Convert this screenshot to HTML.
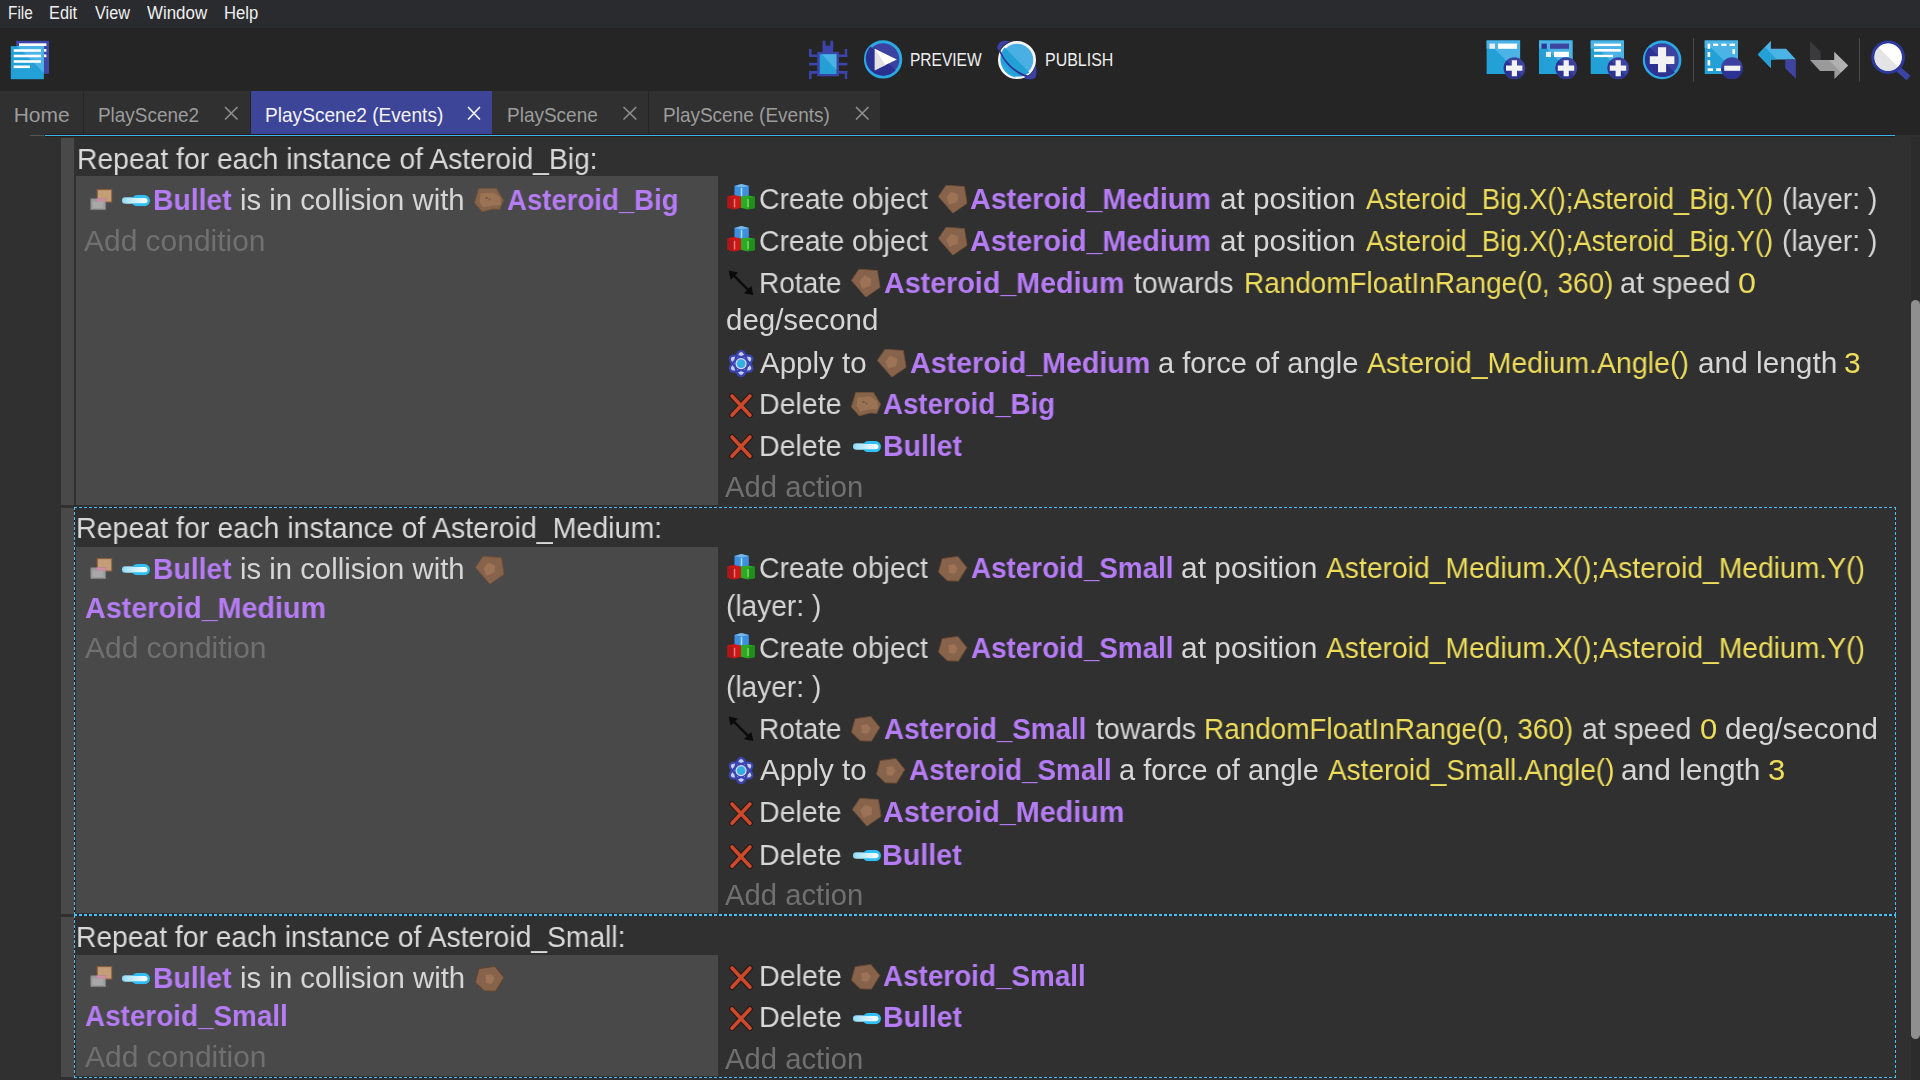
<!DOCTYPE html>
<html><head><meta charset="utf-8">
<style>
html,body{margin:0;padding:0;}
body{width:1920px;height:1080px;overflow:hidden;position:relative;background:#303030;font-family:"Liberation Sans",sans-serif;}
.a{position:absolute;}
.t{position:absolute;white-space:nowrap;line-height:40px;height:40px;transform-origin:0 0;}
.w,.h,.p,.y,.g{will-change:transform;}
.w{font-size:29px;color:#d6d6d6;}
.h{font-size:29px;color:#d9d9d9;}
.p{font-size:29px;font-weight:bold;color:#b67cf6;}
.y{font-size:29px;color:#eedd5a;}
.g{font-size:29px;color:#707070;}
.menu{font-size:18px;color:#f0f0f0;}
.tb{font-size:18px;color:#f0f0f0;}
.tab{font-size:21px;color:#9c9c9c;}
.taba{font-size:21px;color:#f4f4f4;}
.dh{position:absolute;height:1px;background:repeating-linear-gradient(90deg,#4ac0f6 0 3px,#2b2522 3px 5px);}
.dv{position:absolute;width:1px;background:repeating-linear-gradient(180deg,#4ac0f6 0 3px,#2b2522 3px 5px);}
svg.i{position:absolute;overflow:visible;}
</style></head><body>
<!-- menubar -->
<div class="a" style="left:0;top:0;width:1920px;height:28px;background:#2a2b2e"></div>
<!-- toolbar + tabbar bg -->
<div class="a" style="left:0;top:28px;width:1920px;height:107px;background:#252525"></div>
<!-- tabs -->
<div class="a" style="left:0;top:91px;width:83px;height:44px;background:#303030"></div>
<div class="a" style="left:84px;top:91px;width:166px;height:44px;background:#303030"></div>
<div class="a" style="left:251px;top:91px;width:241px;height:44px;background:#3d4599"></div>
<div class="a" style="left:492px;top:91px;width:156px;height:44px;background:#303030"></div>
<div class="a" style="left:649px;top:91px;width:231px;height:44px;background:#303030"></div>
<!-- tab close x -->
<svg class="a" style="left:0;top:0" width="1920" height="140" viewBox="0 0 1920 140">
 <g stroke="#8e8e8e" stroke-width="1.7" stroke-linecap="round">
  <path d="M225.5 107.5L237 119M237 107.5L225.5 119"/>
  <path d="M624 107.5L635.8 119M635.8 107.5L624 119"/>
  <path d="M856.5 107.5L868 119M868 107.5L856.5 119"/>
 </g>
 <path d="M468.5 107.5L479.5 119M479.5 107.5L468.5 119" stroke="#f4f4f4" stroke-width="1.7" stroke-linecap="round"/>
 <!-- blue line -->
 <rect x="45" y="134" width="1850" height="1" fill="#211d1b"/>
 <rect x="45" y="135" width="1850" height="1" fill="#3db5ef"/>
 <rect x="45" y="136" width="1850" height="1" fill="#261f1c"/>
 <rect x="30" y="135" width="14" height="1" fill="#555"/>
</svg>
<!-- scrollbar -->
<div class="a" style="left:1911px;top:137px;width:9px;height:943px;background:#2c2c2c"></div>
<div class="a" style="left:1911px;top:300px;width:8.5px;height:739px;background:#8f8f8f;border-radius:4.5px"></div>
<!-- gutters -->
<div class="a" style="left:61px;top:138px;width:13px;height:367px;background:#494949"></div>
<div class="a" style="left:61px;top:508px;width:13px;height:406px;background:#494949"></div>
<div class="a" style="left:61px;top:917px;width:13px;height:160px;background:#494949"></div>
<!-- condition boxes -->
<div class="a" style="left:76px;top:176px;width:642px;height:329px;background:#494949"></div>
<div class="a" style="left:76px;top:547px;width:642px;height:366px;background:#494949"></div>
<div class="a" style="left:76px;top:955px;width:642px;height:121px;background:#494949"></div>
<!-- selection dashed borders -->
<div class="dh" style="left:74px;top:507px;width:1822px"></div>
<div class="dh" style="left:74px;top:914px;width:1822px"></div>
<div class="dv" style="left:74px;top:507px;height:408px"></div>
<div class="dv" style="left:1895px;top:507px;height:408px"></div>
<div class="dh" style="left:74px;top:915px;width:1822px"></div>
<div class="dh" style="left:74px;top:1077px;width:1822px"></div>
<div class="dv" style="left:74px;top:915px;height:163px"></div>
<div class="dv" style="left:1895px;top:915px;height:163px"></div>


<svg width="0" height="0" style="position:absolute">
<defs>
 <linearGradient id="gcore" x1="0" x2="1" y1="0" y2="0"><stop offset="0" stop-color="#9fe0fa"/><stop offset="1" stop-color="#ffffff"/></linearGradient>
 <symbol id="col" viewBox="0 0 23 22">
  <rect x="7.3" y="0.6" width="15" height="12.8" fill="#c29d75" stroke="#8a5a3a" stroke-width="1.1"/>
  <rect x="0.8" y="10" width="15.2" height="11.2" fill="#9b9b9b" stroke="#7c7c7c" stroke-width="0.8"/>
  <rect x="7" y="9.6" width="9" height="3.2" fill="#d48aa6"/>
  <rect x="2.5" y="13" width="11" height="6.5" fill="#a8a8a8"/>
 </symbol>
 <symbol id="bul" viewBox="0 0 28 11.2">
  <rect x="0" y="2.2" width="13" height="6.6" rx="3.3" fill="#8fdcf9"/>
  <rect x="9.5" y="0" width="18.5" height="11.2" rx="5.6" fill="#31bef4"/>
  <rect x="2" y="3" width="23.5" height="5.2" rx="2.6" fill="url(#gcore)"/>
 </symbol>
 <symbol id="astm" viewBox="0 0 30 29">
  <polygon points="8,0.3 26.7,1.6 29.5,18.6 15,28.6 0.3,11.6" fill="#86634a" stroke="#6f4f37" stroke-width="0.9"/>
  <polygon points="13.4,6.5 20.5,10 19.7,17 11.4,20 8.4,12.6" fill="#9c7356"/>
 </symbol>
 <symbol id="astb" viewBox="0 0 30 24.2">
  <polygon points="4.7,0.3 22.4,0.3 29.7,12.2 25.8,21.6 19.5,21 8.2,24 0.3,15" fill="#86644a" stroke="#6f4f37" stroke-width="0.9"/>
  <path d="M6.5,5.5 L19,4.5 L26,9 L27,17 L19,17.5 L9,19.5 L5.5,14 Z" fill="#9a7254"/>
  <circle cx="12.5" cy="10" r="1.3" fill="#7c5a40"/><circle cx="15.5" cy="11.5" r="1" fill="#7c5a40"/>
 </symbol>
 <symbol id="asts" viewBox="0 0 30 26">
  <polygon points="4.1,2.5 20.2,0.3 29.4,11.6 20.8,25.6 9.5,25.2 0.3,16.4" fill="#86634a" stroke="#5f432f" stroke-width="1"/>
  <polygon points="10.5,9 16.5,8 20,12.5 17,18 11,17.5" fill="#9c7356"/>
 </symbol>
 <symbol id="cre" viewBox="0 0 28.5 26">
  <path d="M7.5,2 L14.5,0 L22,2 L22,12.5 L14.5,14 L7.5,12.5 Z" fill="#3b8fdc"/>
  <path d="M7.5,2 L14.5,3.5 L22,2 L14.5,0 Z" fill="#7ab8ec"/>
  <rect x="13.8" y="4" width="1.6" height="8" fill="#a8dcf8"/>
  <path d="M0.5,12.5 L7,11 L14,12.5 L14,24 L7,25.8 L0.5,24 Z" fill="#cf1717"/>
  <path d="M0.5,12.5 L7,14 L7,25.8 L0.5,24 Z" fill="#b01818"/>
  <rect x="6.8" y="15" width="1.5" height="8.5" fill="#f07878"/>
  <path d="M14,12.5 L21,11.5 L28.3,12.8 L28.3,24.2 L21,25.8 L14,24 Z" fill="#2eaa24"/>
  <path d="M21,14 L28.3,12.8 L28.3,24.2 L21,25.8 Z" fill="#1f8f1a"/>
  <rect x="20.5" y="15" width="1.5" height="8.5" fill="#7ad870"/>
 </symbol>
 <symbol id="rot" viewBox="0 0 26 26">
  <path d="M3.5,3.5 L22.5,22.5" stroke="#0a0a0a" stroke-width="2.4"/>
  <polygon points="0.5,0.5 10,2.5 2.5,10" fill="#0a0a0a"/>
  <polygon points="25.5,25.5 16,23.5 23.5,16" fill="#0a0a0a"/>
 </symbol>
 <symbol id="frc" viewBox="0 0 26.2 27.2">
  <g transform="translate(13.1,13.6)">
   <g fill="#c8cbee">
    <ellipse rx="5.8" ry="12.6"/>
    <ellipse rx="5.8" ry="12.6" transform="rotate(60)"/>
    <ellipse rx="5.8" ry="12.6" transform="rotate(120)"/>
   </g>
   <g fill="none" stroke="#3a44ae" stroke-width="2.2">
    <ellipse rx="5.8" ry="12.6"/>
    <ellipse rx="5.8" ry="12.6" transform="rotate(60)"/>
    <ellipse rx="5.8" ry="12.6" transform="rotate(120)"/>
   </g>
   <circle r="5.6" fill="#d8daf4"/>
   <circle r="4.3" fill="#34ade2"/>
  </g>
 </symbol>
 <symbol id="del" viewBox="0 0 24 25.3">
  <path d="M3,3 L21,22.3 M21,3 L3,22.3" stroke="#2a1612" stroke-width="5.6" stroke-linecap="round"/>
  <path d="M3,3 L21,22.3 M21,3 L3,22.3" stroke="#cb4a2e" stroke-width="3.6" stroke-linecap="round"/>
 </symbol>
</defs></svg>

<svg class="i" style="left:89.5px;top:188.7px" width="22.6" height="21.5"><use href="#col"/></svg>
<svg class="i" style="left:122.0px;top:195.0px" width="28" height="11.2"><use href="#bul"/></svg>
<svg class="i" style="left:474.4px;top:188.1px" width="30" height="24.1"><use href="#astb"/></svg>
<svg class="i" style="left:89.5px;top:558.0px" width="22.6" height="21.5"><use href="#col"/></svg>
<svg class="i" style="left:122.0px;top:564.3px" width="28" height="11.2"><use href="#bul"/></svg>
<svg class="i" style="left:474.9px;top:556.1px" width="29.7" height="28.6"><use href="#astm"/></svg>
<svg class="i" style="left:89.5px;top:966.3px" width="22.6" height="21.5"><use href="#col"/></svg>
<svg class="i" style="left:122.0px;top:972.6px" width="28" height="11.2"><use href="#bul"/></svg>
<svg class="i" style="left:475.0px;top:966.3px" width="29.6" height="25.8"><use href="#asts"/></svg>
<svg class="i" style="left:726.8px;top:184.1px" width="28.3" height="25.8"><use href="#cre"/></svg>
<svg class="i" style="left:938.3px;top:184.7px" width="29.7" height="28.6"><use href="#astm"/></svg>
<svg class="i" style="left:726.8px;top:226.4px" width="28.3" height="25.8"><use href="#cre"/></svg>
<svg class="i" style="left:938.3px;top:227.0px" width="29.7" height="28.6"><use href="#astm"/></svg>
<svg class="i" style="left:728.0px;top:270.0px" width="26" height="25.6"><use href="#rot"/></svg>
<svg class="i" style="left:851.0px;top:268.6px" width="29.7" height="28.6"><use href="#astm"/></svg>
<svg class="i" style="left:727.8px;top:349.6px" width="26.2" height="27.2"><use href="#frc"/></svg>
<svg class="i" style="left:876.5px;top:348.8px" width="29.7" height="28.6"><use href="#astm"/></svg>
<svg class="i" style="left:728.9px;top:392.5px" width="24" height="25.3"><use href="#del"/></svg>
<svg class="i" style="left:851.0px;top:392.4px" width="30" height="24.1"><use href="#astb"/></svg>
<svg class="i" style="left:728.9px;top:434.4px" width="24" height="25.3"><use href="#del"/></svg>
<svg class="i" style="left:853.2px;top:440.6px" width="28" height="11.2"><use href="#bul"/></svg>
<svg class="i" style="left:726.8px;top:553.7px" width="28.3" height="25.8"><use href="#cre"/></svg>
<svg class="i" style="left:938.3px;top:556.1px" width="29.6" height="25.8"><use href="#asts"/></svg>
<svg class="i" style="left:726.8px;top:633.1px" width="28.3" height="25.8"><use href="#cre"/></svg>
<svg class="i" style="left:938.3px;top:635.5px" width="29.6" height="25.8"><use href="#asts"/></svg>
<svg class="i" style="left:728.0px;top:716.0px" width="26" height="25.6"><use href="#rot"/></svg>
<svg class="i" style="left:851.1px;top:716.4px" width="29.6" height="25.8"><use href="#asts"/></svg>
<svg class="i" style="left:727.8px;top:757.1px" width="26.2" height="27.2"><use href="#frc"/></svg>
<svg class="i" style="left:876.4px;top:758.1px" width="29.6" height="25.8"><use href="#asts"/></svg>
<svg class="i" style="left:728.9px;top:801.0px" width="24" height="25.3"><use href="#del"/></svg>
<svg class="i" style="left:851.5px;top:798.1px" width="29.7" height="28.6"><use href="#astm"/></svg>
<svg class="i" style="left:728.9px;top:843.8px" width="24" height="25.3"><use href="#del"/></svg>
<svg class="i" style="left:853.1px;top:850.0px" width="28" height="11.2"><use href="#bul"/></svg>
<svg class="i" style="left:728.9px;top:964.7px" width="24" height="25.3"><use href="#del"/></svg>
<svg class="i" style="left:851.2px;top:963.6px" width="29.6" height="25.8"><use href="#asts"/></svg>
<svg class="i" style="left:728.9px;top:1006.3px" width="24" height="25.3"><use href="#del"/></svg>
<svg class="i" style="left:853.2px;top:1012.5px" width="28" height="11.2"><use href="#bul"/></svg>
<svg class="a" style="left:0;top:0" width="1920" height="91" viewBox="0 0 1920 91">
 <!-- left events icon -->
 <rect x="16" y="40.8" width="33" height="33" fill="#3d45a5"/>
 <rect x="19" y="43.3" width="27.4" height="2.7" fill="#fff"/>
 <rect x="43.6" y="49" width="2.8" height="2.7" fill="#fff"/>
 <rect x="43.6" y="54.5" width="2.8" height="2.7" fill="#fff"/>
 <rect x="10.8" y="46.1" width="33.1" height="33.1" fill="#23a0d5"/>
 <polygon points="17,46.1 43.9,46.1 43.9,73" fill="#4cb3e6"/>
 <rect x="13.7" y="49.2" width="27.3" height="2.6" fill="#fff"/>
 <rect x="13.7" y="54.7" width="27.3" height="2.6" fill="#fff"/>
 <rect x="13.7" y="60.2" width="27.3" height="2.6" fill="#fff"/>
 <rect x="13.7" y="65.5" width="16.3" height="2.6" fill="#fff"/>
 <!-- bug -->
 <g fill="#3c44a8">
  <rect x="817.2" y="51.9" width="21.8" height="24.4"/>
  <rect x="822.6" y="45.6" width="10.6" height="6.5"/>
  <rect x="822.6" y="40.7" width="3" height="5.5"/><rect x="830.2" y="40.7" width="3" height="5.5"/>
  <rect x="809" y="49" width="2.5" height="8"/><rect x="809" y="54.5" width="8.5" height="2.5"/>
  <rect x="844.7" y="49" width="2.5" height="8"/><rect x="838.8" y="54.5" width="8.5" height="2.5"/>
  <rect x="809" y="62.8" width="8.5" height="2.6"/><rect x="838.8" y="62.8" width="8.5" height="2.6"/>
  <rect x="809" y="71" width="2.5" height="8.1"/><rect x="809" y="71" width="8.5" height="2.8"/>
  <rect x="844.7" y="71" width="2.5" height="8.1"/><rect x="838.8" y="71" width="8.5" height="2.8"/>
 </g>
 <rect x="819.8" y="54.2" width="16.6" height="19.8" fill="#25a0d5"/>
 <polygon points="822,54.2 836.4,54.2 836.4,70" fill="#4cb2e5"/>
 <!-- preview -->
 <circle cx="883.1" cy="59.4" r="17.7" fill="#3b429f" stroke="#2aa9e2" stroke-width="3"/>
 <path d="M870.5,46.5 A16.6,16.6 0 0 0 895.7,70.3 Z" fill="#2a3190"/>
 <polygon points="874.8,48.75 874.8,70.2 896.8,59.6" fill="#ffffff"/>
 <polygon points="874.8,48.75 874.8,70.2 885.5,65" fill="#e2e2e4"/>
 <!-- publish -->
 <circle cx="1017" cy="60" r="17.6" fill="#4ab0e4" stroke="#f4f4f4" stroke-width="2.8"/>
 <path d="M1004.6,47.6 A17.6,17.6 0 0 0 1029.4,72.4 Z" fill="#23a0d5"/>
 <path d="M1001.5,62 A17.6,17.6 0 0 0 1016,77.5 L1010,70 Z" fill="#2aa7de"/>
 <path d="M998.5,49.5 C1002,60 1011,70 1022,75.5 C1027,78 1032,78.5 1035.5,77 L1035.8,74.8 C1031,76.5 1026,75.5 1022.5,73.6 C1012,68.5 1004.5,60 1001,51.5 Z" fill="#2c3596"/>
 <path d="M997.3,49 C997,45 999,42 1003,41 C1006,40.5 1009,40.8 1011,41.6 C1006,43 1002,46 999.8,50.5 Z" fill="#3a40a4"/>
 <path d="M1035.3,65.5 C1037,70 1037,75 1035,78 C1032,79.8 1027,79.6 1023.5,78.2 C1028,77.5 1032.5,73 1035.3,65.5 Z" fill="#3a40a4"/>
 <!-- add event -->
 <rect x="1486.6" y="40.4" width="33.5" height="33.6" fill="#23a0d5"/>
 <polygon points="1486.6,40.4 1520.1,40.4 1520.1,74 1494,48.5 1486.6,48.5" fill="#4cb3e6"/>
 <rect x="1489.5" y="43.6" width="5.5" height="5.2" fill="#eee"/>
 <rect x="1498" y="43.6" width="19" height="5.2" fill="#fff"/>
 <!-- add subevent -->
 <rect x="1539" y="40.4" width="33.5" height="33.6" fill="#23a0d5"/>
 <polygon points="1539,40.4 1572.5,40.4 1572.5,74 1546.5,48.5 1539,48.5" fill="#4cb3e6"/>
 <rect x="1541.5" y="43.6" width="5.3" height="5.2" fill="#2d3494"/>
 <rect x="1550" y="43.6" width="19" height="5.2" fill="#3d45a0"/>
 <rect x="1546" y="51.8" width="5" height="5.2" fill="#eee"/>
 <rect x="1554" y="51.8" width="15" height="5.2" fill="#fff"/>
 <!-- add comment -->
 <rect x="1590.7" y="40.4" width="33.3" height="33.6" fill="#23a0d5"/>
 <polygon points="1590.7,40.4 1624,40.4 1624,74 1598,48.5 1590.7,48.5" fill="#4cb3e6"/>
 <rect x="1594" y="43.6" width="27" height="2.5" fill="#fff"/>
 <rect x="1594" y="49" width="27" height="2.6" fill="#fff"/>
 <rect x="1594" y="54.8" width="19" height="2.3" fill="#fff"/>
 <!-- plus badges -->
 <g id="pb">
 </g>
 <circle cx="1514.4" cy="68.2" r="10.9" fill="#3b42a0"/>
 <path d="M1506.7,60.5 A10.9,10.9 0 0 0 1522.1,75.9 Z" fill="#2b3291"/>
 <path d="M1511.8,60.2h5.2v5.4h5.4v5.2h-5.4v5.5h-5.2v-5.5h-5.8v-5.2h5.8z" fill="#f2f2f2"/>
 <circle cx="1566.2" cy="68.2" r="10.9" fill="#3b42a0"/>
 <path d="M1558.5,60.5 A10.9,10.9 0 0 0 1573.9,75.9 Z" fill="#2b3291"/>
 <path d="M1563.6,60.2h5.2v5.4h5.4v5.2h-5.4v5.5h-5.2v-5.5h-5.8v-5.2h5.8z" fill="#f2f2f2"/>
 <circle cx="1618.2" cy="68.2" r="10.9" fill="#3b42a0"/>
 <path d="M1610.5,60.5 A10.9,10.9 0 0 0 1625.9,75.9 Z" fill="#2b3291"/>
 <path d="M1615.6,60.2h5.2v5.4h5.4v5.2h-5.4v5.5h-5.2v-5.5h-5.8v-5.2h5.8z" fill="#f2f2f2"/>
 <!-- big plus -->
 <circle cx="1662.1" cy="59.9" r="18" fill="#3b42a0" stroke="#2aa9e2" stroke-width="2.6"/>
 <path d="M1649.4,47.2 A18,18 0 0 0 1674.8,72.6 Z" fill="#2b3291"/>
 <path d="M1658,47.3h8.1v8.9h8.3v7.7h-8.3v8.3h-8.1v-8.3h-8.2v-7.7h8.2z" fill="#f2f2f2"/>
 <!-- separators -->
 <rect x="1693" y="38" width="1" height="43.7" fill="#4a4a4a"/>
 <rect x="1859" y="38" width="1" height="43.6" fill="#4a4a4a"/>
 <!-- delete -->
 <rect x="1704.7" y="40.4" width="33.3" height="33.6" fill="#23a0d5"/>
 <polygon points="1704.7,40.4 1738,40.4 1738,74 1711,48 1704.7,48" fill="#4cb3e6"/>
 <g fill="#fff">
  <rect x="1713" y="43.6" width="5.2" height="2.3"/><rect x="1721.2" y="43.6" width="5.3" height="2.3"/><rect x="1729.5" y="43.6" width="5.5" height="2.3"/>
  <rect x="1707.6" y="43.6" width="2.6" height="5.2"/><rect x="1707.6" y="52" width="2.6" height="5"/><rect x="1707.6" y="60.1" width="2.6" height="5.4"/>
  <rect x="1732.5" y="49" width="2.5" height="5"/>
  <rect x="1707.6" y="68.3" width="5.4" height="2.7"/><rect x="1716" y="68.3" width="5" height="2.7"/>
 </g>
 <circle cx="1732" cy="68.2" r="10.9" fill="#3b42a0"/>
 <path d="M1721.1,68.2 A10.9,10.9 0 0 0 1742.9,68.2 Z" fill="#2b3291"/>
 <rect x="1724.2" y="65.7" width="16.1" height="5.1" fill="#f2f2f2"/>
 <!-- undo -->
 <polygon points="1757.8,54.5 1770.9,40.7 1770.9,48.75 1786.1,48.75 1795.9,59.6 1770.9,59.6 1770.9,68" fill="#4cb3e6"/>
 <polygon points="1757.8,54.5 1765,47 1777,59.6 1770.9,59.6 1770.9,68" fill="#23a0d5"/>
 <polygon points="1785.3,59.6 1795.9,59.6 1795.9,78.8 1785.3,68.2" fill="#3d45a0"/>
 <!-- redo (disabled) -->
 <polygon points="1810,40.9 1820.6,51.6 1820.6,60 1810,60" fill="#3a3a3c"/>
 <polygon points="1810,60 1834.4,60 1834.4,51.9 1848.1,65.6 1834.4,79.1 1834.4,70.9 1820,70.9" fill="#9a9a9a"/>
 <polygon points="1829,60 1834.4,60 1834.4,51.9 1848.1,65.6 1841,72.5" fill="#b0b0b0"/>
 <!-- search -->
 <path d="M1896,67 L1908.5,78" stroke="#3a44a4" stroke-width="6" stroke-linecap="butt"/>
 <circle cx="1888.1" cy="57.2" r="15.2" fill="#e6e6e8" stroke="#2c3a9e" stroke-width="3.2"/>
 <path d="M1878.4,47.5 A13.7,13.7 0 0 1 1897.8,66.9 Z" fill="#ffffff"/>
 <path d="M1878.4,47.5 A13.7,13.7 0 0 0 1897.8,66.9 Z" fill="#e4e4e6"/>
</svg>

<div class="t menu" style="left:8.25px;top:-7.24px;transform:scaleX(0.8536);">File</div>
<div class="t menu" style="left:48.99px;top:-7.24px;transform:scaleX(0.9067);">Edit</div>
<div class="t menu" style="left:94.90px;top:-7.24px;transform:scaleX(0.9026);">View</div>
<div class="t menu" style="left:147.40px;top:-7.24px;transform:scaleX(0.9391);">Window</div>
<div class="t menu" style="left:223.88px;top:-7.24px;transform:scaleX(0.9250);">Help</div>
<div class="t tb" style="left:910.04px;top:40.26px;transform:scaleX(0.8622);">PREVIEW</div>
<div class="t tb" style="left:1044.61px;top:40.26px;transform:scaleX(0.8867);">PUBLISH</div>
<div class="t tab" style="left:13.70px;top:94.72px;">Home</div>
<div class="t tab" style="left:97.85px;top:94.72px;transform:scaleX(0.9009);">PlayScene2</div>
<div class="t taba" style="left:264.69px;top:94.72px;transform:scaleX(0.9093);">PlayScene2 (Events)</div>
<div class="t tab" style="left:507.10px;top:94.72px;transform:scaleX(0.9040);">PlayScene</div>
<div class="t tab" style="left:662.85px;top:94.72px;transform:scaleX(0.9044);">PlayScene (Events)</div>
<div class="t h" style="left:76.95px;top:138.95px;transform:scaleX(0.9756);">Repeat for each instance of Asteroid_Big:</div>
<div class="t p" style="left:153.05px;top:179.95px;transform:scaleX(0.9747);">Bullet</div>
<div class="t w" style="left:240.48px;top:179.95px;transform:scaleX(1.0100);">is in collision with</div>
<div class="t p" style="left:507.25px;top:179.95px;transform:scaleX(0.9506);">Asteroid_Big</div>
<div class="t g" style="left:84.20px;top:220.95px;transform:scaleX(1.0328);">Add condition</div>
<div class="t w" style="left:759.12px;top:178.75px;transform:scaleX(0.9791);">Create object</div>
<div class="t p" style="left:969.81px;top:178.75px;transform:scaleX(0.9900);">Asteroid_Medium</div>
<div class="t w" style="left:1219.78px;top:178.75px;transform:scaleX(1.0246);">at position</div>
<div class="t y" style="left:1366.20px;top:178.75px;transform:scaleX(0.9459);">Asteroid_Big.X();Asteroid_Big.Y()</div>
<div class="t w" style="left:1782.43px;top:178.75px;transform:scaleX(0.9688);">(layer: )</div>
<div class="t w" style="left:759.12px;top:221.05px;transform:scaleX(0.9791);">Create object</div>
<div class="t p" style="left:969.81px;top:221.05px;transform:scaleX(0.9900);">Asteroid_Medium</div>
<div class="t w" style="left:1219.78px;top:221.05px;transform:scaleX(1.0246);">at position</div>
<div class="t y" style="left:1366.20px;top:221.05px;transform:scaleX(0.9459);">Asteroid_Big.X();Asteroid_Big.Y()</div>
<div class="t w" style="left:1782.43px;top:221.05px;transform:scaleX(0.9688);">(layer: )</div>
<div class="t w" style="left:758.87px;top:262.65px;transform:scaleX(0.9663);">Rotate</div>
<div class="t p" style="left:883.81px;top:262.65px;transform:scaleX(0.9884);">Asteroid_Medium</div>
<div class="t w" style="left:1134.00px;top:262.65px;transform:scaleX(0.9802);">towards</div>
<div class="t y" style="left:1243.87px;top:262.65px;transform:scaleX(0.9626);">RandomFloatInRange(0, 360)</div>
<div class="t w" style="left:1620.31px;top:262.65px;transform:scaleX(0.9917);">at speed</div>
<div class="t y" style="left:1737.89px;top:262.65px;transform:scaleX(1.1143);">0</div>
<div class="t w" style="left:725.88px;top:300.05px;transform:scaleX(1.0163);">deg/second</div>
<div class="t w" style="left:759.90px;top:342.85px;transform:scaleX(1.0183);">Apply to</div>
<div class="t p" style="left:909.51px;top:342.85px;transform:scaleX(0.9876);">Asteroid_Medium</div>
<div class="t w" style="left:1158.30px;top:342.85px;transform:scaleX(1.0025);">a force of angle</div>
<div class="t y" style="left:1367.40px;top:342.85px;transform:scaleX(0.9840);">Asteroid_Medium.Angle()</div>
<div class="t w" style="left:1697.97px;top:342.85px;transform:scaleX(1.0286);">and length</div>
<div class="t y" style="left:1844.46px;top:342.85px;transform:scaleX(1.0357);">3</div>
<div class="t w" style="left:758.83px;top:383.65px;transform:scaleX(0.9840);">Delete</div>
<div class="t p" style="left:883.35px;top:383.65px;transform:scaleX(0.9534);">Asteroid_Big</div>
<div class="t w" style="left:758.83px;top:425.55px;transform:scaleX(0.9840);">Delete</div>
<div class="t p" style="left:883.34px;top:425.55px;transform:scaleX(0.9797);">Bullet</div>
<div class="t g" style="left:724.90px;top:467.35px;transform:scaleX(1.0081);">Add action</div>
<div class="t h" style="left:76.43px;top:508.45px;transform:scaleX(0.9854);">Repeat for each instance of Asteroid_Medium:</div>
<div class="t p" style="left:153.05px;top:549.25px;transform:scaleX(0.9747);">Bullet</div>
<div class="t w" style="left:240.48px;top:549.25px;transform:scaleX(1.0100);">is in collision with</div>
<div class="t p" style="left:84.61px;top:587.55px;transform:scaleX(0.9909);">Asteroid_Medium</div>
<div class="t g" style="left:84.90px;top:628.25px;transform:scaleX(1.0328);">Add condition</div>
<div class="t w" style="left:759.12px;top:548.35px;transform:scaleX(0.9791);">Create object</div>
<div class="t p" style="left:970.64px;top:548.35px;transform:scaleX(0.9591);">Asteroid_Small</div>
<div class="t w" style="left:1181.07px;top:548.35px;transform:scaleX(1.0323);">at position</div>
<div class="t y" style="left:1326.20px;top:548.35px;transform:scaleX(0.9748);">Asteroid_Medium.X();Asteroid_Medium.Y()</div>
<div class="t w" style="left:725.83px;top:586.25px;transform:scaleX(0.9688);">(layer: )</div>
<div class="t w" style="left:759.12px;top:627.75px;transform:scaleX(0.9791);">Create object</div>
<div class="t p" style="left:970.64px;top:627.75px;transform:scaleX(0.9591);">Asteroid_Small</div>
<div class="t w" style="left:1181.07px;top:627.75px;transform:scaleX(1.0323);">at position</div>
<div class="t y" style="left:1326.20px;top:627.75px;transform:scaleX(0.9748);">Asteroid_Medium.X();Asteroid_Medium.Y()</div>
<div class="t w" style="left:725.83px;top:666.55px;transform:scaleX(0.9688);">(layer: )</div>
<div class="t w" style="left:758.87px;top:708.65px;transform:scaleX(0.9663);">Rotate</div>
<div class="t p" style="left:883.84px;top:708.65px;transform:scaleX(0.9587);">Asteroid_Small</div>
<div class="t w" style="left:1096.00px;top:708.65px;transform:scaleX(0.9861);">towards</div>
<div class="t y" style="left:1204.28px;top:708.65px;transform:scaleX(0.9621);">RandomFloatInRange(0, 360)</div>
<div class="t w" style="left:1582.02px;top:708.65px;transform:scaleX(0.9817);">at speed</div>
<div class="t y" style="left:1700.13px;top:708.65px;transform:scaleX(1.0714);">0</div>
<div class="t w" style="left:1724.58px;top:708.65px;transform:scaleX(1.0197);">deg/second</div>
<div class="t w" style="left:759.90px;top:750.35px;transform:scaleX(1.0183);">Apply to</div>
<div class="t p" style="left:909.04px;top:750.35px;transform:scaleX(0.9601);">Asteroid_Small</div>
<div class="t w" style="left:1118.90px;top:750.35px;">a force of angle</div>
<div class="t y" style="left:1328.10px;top:750.35px;transform:scaleX(0.9658);">Asteroid_Small.Angle()</div>
<div class="t w" style="left:1621.37px;top:750.35px;transform:scaleX(1.0293);">and length</div>
<div class="t y" style="left:1767.63px;top:750.35px;transform:scaleX(1.0714);">3</div>
<div class="t w" style="left:758.83px;top:792.15px;transform:scaleX(0.9840);">Delete</div>
<div class="t p" style="left:882.71px;top:792.15px;transform:scaleX(0.9921);">Asteroid_Medium</div>
<div class="t w" style="left:758.83px;top:834.95px;transform:scaleX(0.9840);">Delete</div>
<div class="t p" style="left:882.32px;top:834.95px;transform:scaleX(0.9886);">Bullet</div>
<div class="t g" style="left:724.90px;top:874.65px;transform:scaleX(1.0081);">Add action</div>
<div class="t h" style="left:76.45px;top:917.05px;transform:scaleX(0.9738);">Repeat for each instance of Asteroid_Small:</div>
<div class="t p" style="left:153.05px;top:957.55px;transform:scaleX(0.9747);">Bullet</div>
<div class="t w" style="left:240.48px;top:957.55px;transform:scaleX(1.0123);">is in collision with</div>
<div class="t p" style="left:84.64px;top:995.75px;transform:scaleX(0.9606);">Asteroid_Small</div>
<div class="t g" style="left:84.90px;top:1036.95px;transform:scaleX(1.0328);">Add condition</div>
<div class="t w" style="left:758.52px;top:955.85px;transform:scaleX(0.9877);">Delete</div>
<div class="t p" style="left:883.34px;top:955.85px;transform:scaleX(0.9601);">Asteroid_Small</div>
<div class="t w" style="left:758.52px;top:997.45px;transform:scaleX(0.9877);">Delete</div>
<div class="t p" style="left:883.34px;top:997.45px;transform:scaleX(0.9797);">Bullet</div>
<div class="t g" style="left:724.90px;top:1039.15px;transform:scaleX(1.0081);">Add action</div>
</body></html>
